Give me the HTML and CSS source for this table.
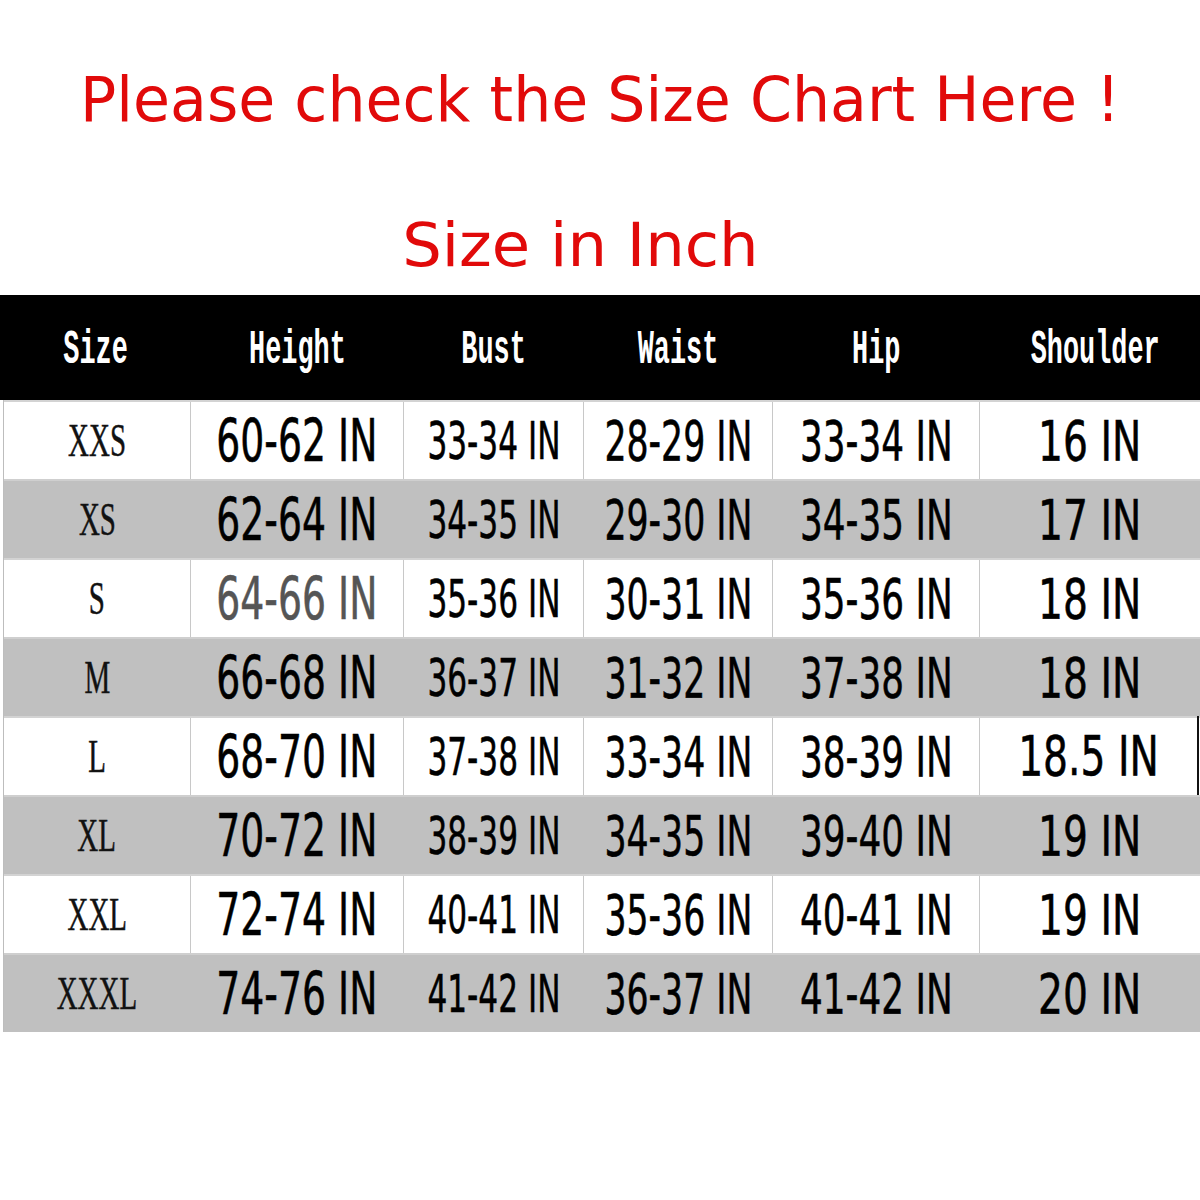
FILE: index.html
```html
<!DOCTYPE html>
<html lang="en">
<head>
<meta charset="utf-8">
<title>Size Chart</title>
<link rel="stylesheet" href="styles.css">
</head>
<body>
<div class="page">
  <div class="title"><span>Please check the Size Chart Here !</span></div>
  <div class="subtitle"><span>Size in Inch</span></div>

  <div class="head">
    <div class="hc"><span>Size</span></div>
    <div class="hc"><span>Height</span></div>
    <div class="hc"><span>Bust</span></div>
    <div class="hc"><span>Waist</span></div>
    <div class="hc"><span>Hip</span></div>
    <div class="hc"><span>Shoulder</span></div>
  </div>

  <div class="rows">
    <div class="row white">
      <div class="c size"><span>XXS</span></div>
      <div class="c height"><span>60-62 IN</span></div>
      <div class="c bust"><span>33-34 IN</span></div>
      <div class="c waist"><span>28-29 IN</span></div>
      <div class="c hip"><span>33-34 IN</span></div>
      <div class="c shoulder"><span>16 IN</span></div>
    </div>
    <div class="row grey">
      <div class="c size"><span>XS</span></div>
      <div class="c height"><span>62-64 IN</span></div>
      <div class="c bust"><span>34-35 IN</span></div>
      <div class="c waist"><span>29-30 IN</span></div>
      <div class="c hip"><span>34-35 IN</span></div>
      <div class="c shoulder"><span>17 IN</span></div>
    </div>
    <div class="row white">
      <div class="c size"><span>S</span></div>
      <div class="c height dim"><span>64-66 IN</span></div>
      <div class="c bust"><span>35-36 IN</span></div>
      <div class="c waist"><span>30-31 IN</span></div>
      <div class="c hip"><span>35-36 IN</span></div>
      <div class="c shoulder"><span>18 IN</span></div>
    </div>
    <div class="row grey">
      <div class="c size"><span>M</span></div>
      <div class="c height"><span>66-68 IN</span></div>
      <div class="c bust"><span>36-37 IN</span></div>
      <div class="c waist"><span>31-32 IN</span></div>
      <div class="c hip"><span>37-38 IN</span></div>
      <div class="c shoulder"><span>18 IN</span></div>
    </div>
    <div class="row white edge">
      <div class="c size"><span>L</span></div>
      <div class="c height"><span>68-70 IN</span></div>
      <div class="c bust"><span>37-38 IN</span></div>
      <div class="c waist"><span>33-34 IN</span></div>
      <div class="c hip"><span>38-39 IN</span></div>
      <div class="c shoulder"><span>18.5 IN</span></div>
    </div>
    <div class="row grey">
      <div class="c size"><span>XL</span></div>
      <div class="c height"><span>70-72 IN</span></div>
      <div class="c bust"><span>38-39 IN</span></div>
      <div class="c waist"><span>34-35 IN</span></div>
      <div class="c hip"><span>39-40 IN</span></div>
      <div class="c shoulder"><span>19 IN</span></div>
    </div>
    <div class="row white">
      <div class="c size"><span>XXL</span></div>
      <div class="c height"><span>72-74 IN</span></div>
      <div class="c bust"><span>40-41 IN</span></div>
      <div class="c waist"><span>35-36 IN</span></div>
      <div class="c hip"><span>40-41 IN</span></div>
      <div class="c shoulder"><span>19 IN</span></div>
    </div>
    <div class="row grey">
      <div class="c size"><span>XXXL</span></div>
      <div class="c height"><span>74-76 IN</span></div>
      <div class="c bust"><span>41-42 IN</span></div>
      <div class="c waist"><span>36-37 IN</span></div>
      <div class="c hip"><span>41-42 IN</span></div>
      <div class="c shoulder"><span>20 IN</span></div>
    </div>
  </div>
</div>
</body>
</html>
```

FILE: styles.css
```css
html, body {
  margin: 0;
  padding: 0;
  background: #ffffff;
}

.page {
  width: 1200px;
  height: 1200px;
  overflow: hidden;
}

.title, .subtitle {
  font-family: "DejaVu Sans", "Liberation Sans", sans-serif;
  color: #e10a0a;
  text-align: center;
  white-space: nowrap;
}

.title {
  padding-top: 64px;
  height: 72px;
  font-size: 62px;
  line-height: 72px;
}

.title span {
  display: inline-block;
  transform: scaleX(0.97);
}

.subtitle {
  margin-top: 74px;
  height: 70px;
  font-size: 60px;
  line-height: 70px;
  padding-right: 40px;
}

.subtitle span {
  display: inline-block;
  transform: scaleX(1.04);
}

.head {
  margin-top: 15px;
  height: 105px;
  background: #000000;
  display: grid;
  grid-template-columns: 191px 213px 180px 189px 207px 1fr;
}

.hc {
  display: flex;
  align-items: center;
  justify-content: center;
  padding-top: 4px;
  font-family: "Liberation Mono", "DejaVu Sans Mono", monospace;
  font-weight: bold;
  font-size: 48px;
  color: #ffffff;
  white-space: nowrap;
}

.hc span {
  display: inline-block;
  transform: scaleX(0.56);
}

.rows {
  margin-left: 3px;
  border-left: 1px solid #bdbdbd;
}

.row {
  display: grid;
  grid-template-columns: 187px 213px 180px 189px 207px 1fr;
  height: 79px;
  box-sizing: border-box;
  border-top: 2px solid #d3d3d3;
}

.row.white {
  background: #ffffff;
}

.row.grey {
  background: #c0c0c0;
  border-top-color: #cfcfcf;
}

.c {
  display: flex;
  align-items: center;
  justify-content: center;
  font-family: "DejaVu Sans", "Liberation Sans", sans-serif;
  color: #000000;
  white-space: nowrap;
  border-right: 1px solid #c8c8c8;
  -webkit-text-stroke: 0.6px currentColor;
}

.row.grey .c {
  border-right-color: #c0c0c0;
}

.c:last-child {
  border-right: none;
}

.row.edge .c:last-child {
  border-right: 2px solid #111111;
  margin-right: 1px;
  margin-top: -2px;
}

.c span {
  display: inline-block;
}

.c.size {
  font-family: "Liberation Serif", "DejaVu Serif", serif;
  font-size: 46px;
  -webkit-text-stroke: 0.5px #1a1a1a;
  color: #111111;
}

.c.size span {
  transform: scaleX(0.63);
}

.c.height {
  font-size: 59px;
}

.c.height span {
  transform: scaleX(0.64);
}

.c.bust {
  font-size: 52px;
}

.c.bust span {
  transform: scaleX(0.6);
}

.c.waist {
  font-size: 56px;
}

.c.waist span {
  transform: scaleX(0.62);
}

.c.hip {
  font-size: 56px;
}

.c.hip span {
  transform: scaleX(0.64);
}

.c.shoulder {
  font-size: 56px;
}

.c.shoulder span {
  transform: scaleX(0.7);
}

.c.dim {
  color: #555555;
}
```
